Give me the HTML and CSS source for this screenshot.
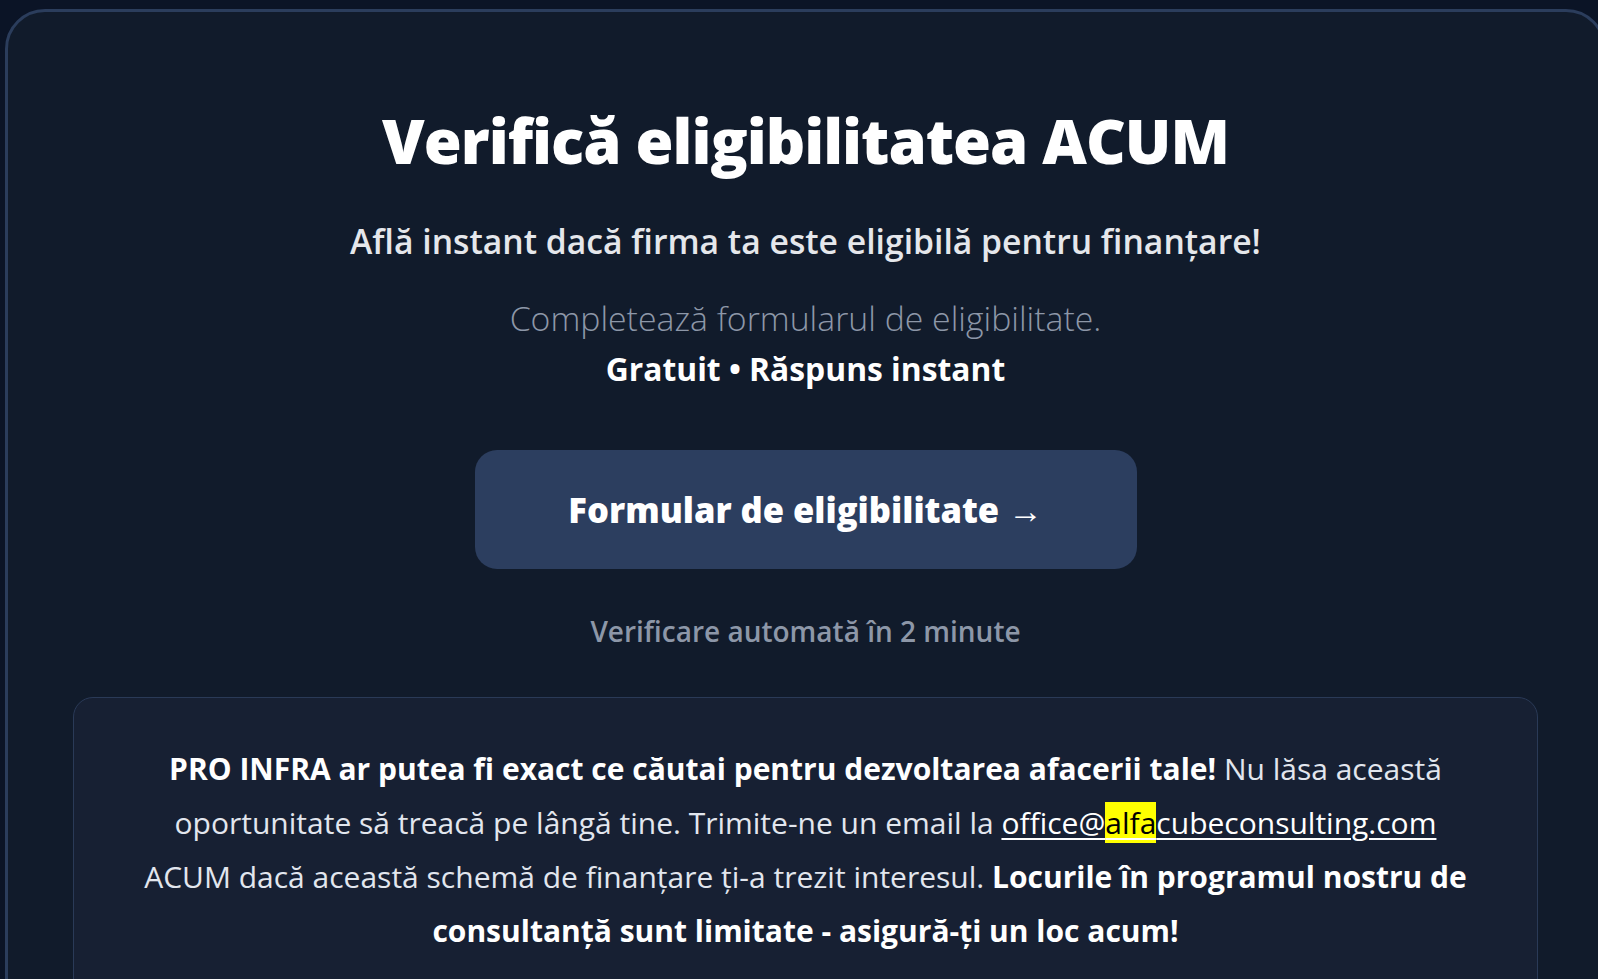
FILE: index.html
```html
<!DOCTYPE html>
<html lang="ro">

<head>
  <meta charset="UTF-8">
  <meta name="viewport" content="width=device-width, initial-scale=1.0">
  <title>Verifică eligibilitatea</title>
  <link rel="stylesheet" href="styles.css">
</head>

<body>
  <div class="page">
    <section class="panel">
      <h1 class="title">Verifică eligibilitatea ACUM</h1>
      <p class="subtitle">Află instant dacă firma ta este eligibilă pentru finanțare!</p>
      <p class="lead">Completează formularul de eligibilitate.</p>
      <p class="perks">Gratuit • Răspuns instant</p>

      <a class="cta" href="#">Formular de eligibilitate →</a>

      <p class="note">Verificare automată în 2 minute</p>

      <div class="info">
        <p>
          <strong>PRO INFRA ar putea fi exact ce căutai pentru dezvoltarea afacerii tale!</strong>
          Nu lăsa această oportunitate să treacă pe lângă tine. Trimite-ne un email la
          <a href="#">office@<mark>alfa</mark>cubeconsulting.com</a>
          ACUM dacă această schemă de finanțare ți-a trezit interesul.
          <strong>Locurile în programul nostru de consultanță sunt limitate - asigură-ți un loc acum!</strong>
        </p>
      </div>
    </section>
  </div>
</body>

</html>
```

FILE: styles.css
```css
body {
  margin: 0;
  background-color: #0b1426;
  font-family: "Open Sans", "Noto Sans", sans-serif;
  color: #ffffff;
  overflow: hidden;
  height: 100vh;
}

.page {
  padding: 9px 0 0 5px;
}

.panel {
  width: 1601px;
  box-sizing: border-box;
  min-height: 1100px;
  background-color: #111b2b;
  border: 3px solid #2b3d5c;
  border-radius: 40px;
  text-align: center;
  padding-top: 88px;
}

.title {
  margin: 0;
  font-size: 61.5px;
  font-weight: 800;
  line-height: 80px;
  letter-spacing: -1px;
}

.subtitle {
  margin: 39px 0 0;
  font-size: 33.7px;
  font-weight: 600;
  color: #e5e7eb;
  line-height: 44px;
}

.lead {
  margin: 30px 0 0;
  font-size: 33.8px;
  font-weight: 300;
  color: #8d97a8;
  line-height: 50px;
}

.perks {
  margin: 1px 0 0;
  font-size: 31.8px;
  font-weight: 700;
  line-height: 50px;
}

.cta {
  display: inline-flex;
  align-items: center;
  justify-content: center;
  margin-top: 56px;
  width: 662px;
  height: 119px;
  background-color: #2c3e5f;
  border-radius: 22px;
  color: #ffffff;
  font-size: 34.5px;
  font-weight: 800;
  text-decoration: none;
}

.note {
  margin: 40px 0 0;
  font-size: 28px;
  font-weight: 600;
  color: #8d97a8;
  line-height: 44px;
}

.info {
  margin: 44px 65px 0;
  padding: 44px 60px 40px;
  background-color: #172033;
  border: 1px solid #2a3a57;
  border-radius: 20px;
}

.info p {
  margin: 0;
  font-size: 30px;
  line-height: 54px;
  color: #e2e6ee;
  font-weight: 400;
}

.info strong {
  color: #ffffff;
  font-weight: 700;
}

.info a {
  color: #ffffff;
  text-decoration: underline;
  text-underline-offset: 4px;
  text-decoration-thickness: 2px;
}

mark {
  background-color: #ffff00;
  color: #000000;
}
```
